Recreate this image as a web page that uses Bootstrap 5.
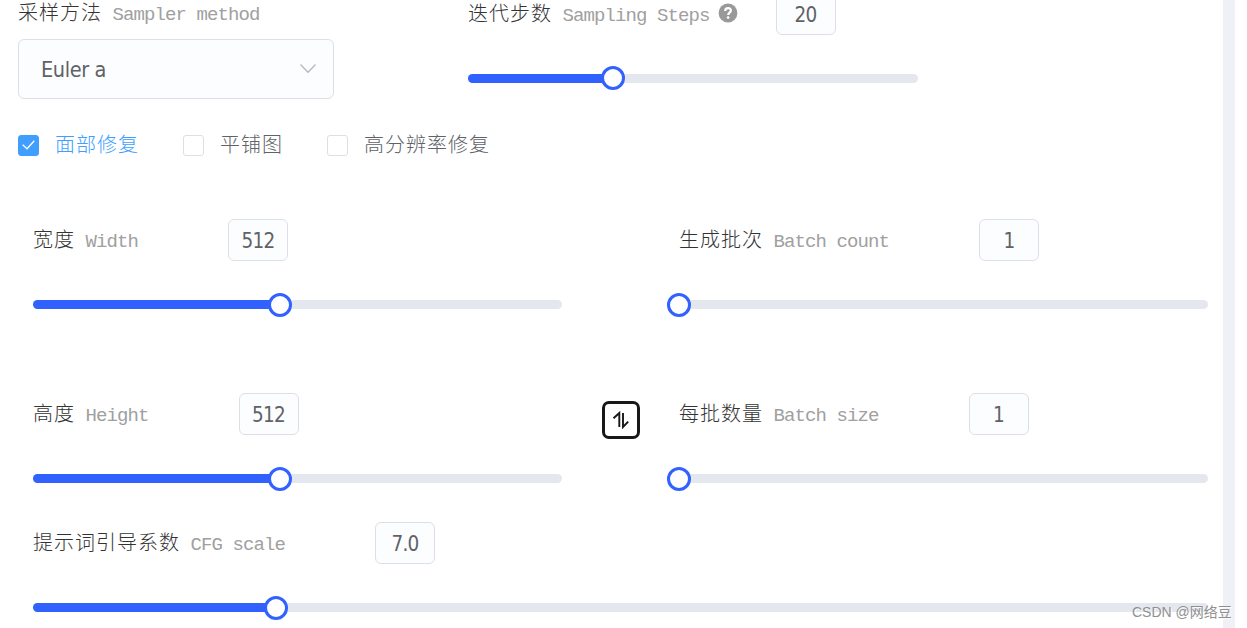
<!DOCTYPE html>
<html lang="zh-CN">
<head>
  <meta charset="UTF-8" />
  <meta name="viewport" content="width=device-width, initial-scale=1.0"/>
  <title>采样设置</title>
  <!-- Bootstrap CDN -->
  <link href="https://cdn.jsdelivr.net/npm/bootstrap@5.3.0/dist/css/bootstrap.min.css" rel="stylesheet">
  <style>
    body {
      height: 628px;
      overflow: hidden;
      background: #fff;
      color: #333;
      font-family: "Liberation Mono", "Noto Sans CJK SC Light", "Noto Sans CJK SC", monospace;
      font-size: 20px;
      font-weight: 300;
      letter-spacing: 1px;
      line-height: 30px;
    }
    .panel {
      width: 1235px;
      height: 628px;
      border-right: 12px solid #f0f1f6;
      overflow: hidden;
    }

    /* labels */
    .en { color: #a0a0a0; font-size: 19px; letter-spacing: -.9px; white-space: pre; }
    .label-text { padding-top: 4px; white-space: nowrap; }
    .param-head { height: 42px; }
    .param-head .num-box { margin-left: 90px; }

    /* inputs */
    .num-box, .sampler-select {
      border: 1px solid #dcdfe6;
      border-radius: 6px;
      background: #fcfdff;
      color: #606266;
      font-family: "DejaVu Sans Condensed", "Noto Sans", sans-serif;
      font-size: 20.5px;
      font-weight: 400;
      letter-spacing: -.7px;
    }
    .num-box { width: 60px; height: 42px; padding-top: 2px; flex: none; }
    .sampler-select { width: 316px; height: 60px; padding: 2px 16px 0 22px; font-size: 21.5px; letter-spacing: -.4px; }
    .sampler-select svg { margin-top: -2px; }

    /* sliders */
    .track { height: 9px; border-radius: 5px; background: #e4e7ed; }
    .track-fill { height: 9px; border-radius: 5px; background: #3162ff; }
    .thumb {
      position: absolute;
      top: -7px;
      width: 24px;
      height: 24px;
      border: 3px solid #3162ff;
      border-radius: 50%;
      background: #fff;
      transform: translateX(-50%);
    }
    .param-head + .track { margin-top: 39px; }

    .top-row { height: 99px; padding-left: 18px; }
    .sampler-col { width: 450px; margin-top: -4px; }
    .sampler-select { margin-top: 9px; }
    .steps-col { width: 450px; margin-top: -7px; }
    .steps-col .thumb { top: -8px; }
    .help-icon { margin: -2px 0 0 8px; }
    .steps-col .param-head .num-box { margin-left: 38px; }

    .check-row { padding: 31px 0 0 18px; gap: 44px; color: #606266; }
    .check-item { height: 30px; gap: 16px; }
    .check-item .check-text { padding-top: 3px; }
    .check-box {
      width: 21px;
      height: 21px;
      border: 1px solid #dcdfe6;
      border-radius: 3px;
      background: #fff;
    }
    .check-item.checked { color: #409eff; }
    .check-item.checked .check-box { border-color: #409eff; background: #409eff; }

    .param-row { padding-left: 33px; }
    .param { width: 529px; }
    .param.wide { width: 1175px; }
    .swap-col { width: 117px; padding: 8px 0 0 40px; }
    .swap-btn {
      width: 38px;
      height: 38px;
      border: 3px solid #18181a;
      border-radius: 7px;
      background: #fff;
    }
    .row-size { padding-top: 59px; }
    .row-height { padding-top: 84px; }
    .row-cfg { padding-top: 39px; }

    .watermark {
      position: absolute;
      left: 1132px;
      top: 601px;
      color: #909090;
      font: 400 14px/22px "Liberation Sans", "Noto Sans CJK SC", sans-serif;
      letter-spacing: 0;
      text-shadow: 1px 1px 0 rgba(255, 255, 255, .8);
      white-space: nowrap;
    }
  </style>
</head>
<body>

  <main class="panel">

    <!-- Sampler and steps -->
    <section class="top-row d-flex align-items-start">
      <div class="sampler-col">
        <div class="label-text">采样方法<span class="en"> Sampler method</span></div>
        <div class="sampler-select d-flex align-items-center justify-content-between">
          <span>Euler a</span>
          <svg width="18" height="12" viewBox="0 0 18 12" fill="none" stroke="#b4b8c0" stroke-width="1.3"><path d="M1.5 1.5 9 9.3l7.500-7.800"/></svg>
        </div>
      </div>
      <div class="steps-col">
        <div class="param-head d-flex align-items-center">
          <span class="label-text">迭代步数<span class="en"> Sampling Steps</span></span>
          <svg class="help-icon" width="20" height="20" viewBox="0 0 20 20">
            <circle cx="10" cy="10" r="9.400" fill="#999"/>
            <path d="M7.200 7.900c0-3.700 5.700-3.700 5.700-.3 0 2-2.700 2.100-2.700 4.300" fill="none" stroke="#fff" stroke-width="2.200"/>
            <circle cx="10.100" cy="14.500" r="1.350" fill="#fff"/>
          </svg>
          <div class="num-box d-flex align-items-center justify-content-center">20</div>
        </div>
        <div class="track position-relative">
          <div class="track-fill" style="width: 32.2%"></div>
          <div class="thumb" style="left: 32.2%"></div>
        </div>
      </div>
    </section>

    <!-- Options -->
    <section class="check-row d-flex">
      <div class="check-item checked d-flex align-items-center">
        <span class="check-box d-flex align-items-center justify-content-center">
          <svg width="15" height="13" viewBox="0 0 15 13" fill="none" stroke="#fff" stroke-width="1.300"><path d="M1.700 5.700 6 9.800l7.300-8"/></svg>
        </span>
        <span class="check-text">面部修复</span>
      </div>
      <div class="check-item d-flex align-items-center">
        <span class="check-box"></span>
        <span class="check-text">平铺图</span>
      </div>
      <div class="check-item d-flex align-items-center">
        <span class="check-box"></span>
        <span class="check-text">高分辨率修复</span>
      </div>
    </section>

    <!-- Width / batch count -->
    <section class="param-row row-size d-flex">
      <div class="param">
        <div class="param-head d-flex align-items-center">
          <span class="label-text">宽度<span class="en"> Width</span></span>
          <div class="num-box d-flex align-items-center justify-content-center">512</div>
        </div>
        <div class="track position-relative">
          <div class="track-fill" style="width: 46.7%"></div>
          <div class="thumb" style="left: 46.7%"></div>
        </div>
      </div>
      <div class="swap-col"></div>
      <div class="param">
        <div class="param-head d-flex align-items-center">
          <span class="label-text">生成批次<span class="en"> Batch count</span></span>
          <div class="num-box d-flex align-items-center justify-content-center">1</div>
        </div>
        <div class="track position-relative">
          <div class="thumb" style="left: 0%"></div>
        </div>
      </div>
    </section>

    <!-- Height / batch size -->
    <section class="param-row row-height d-flex">
      <div class="param">
        <div class="param-head d-flex align-items-center">
          <span class="label-text">高度<span class="en"> Height</span></span>
          <div class="num-box d-flex align-items-center justify-content-center">512</div>
        </div>
        <div class="track position-relative">
          <div class="track-fill" style="width: 46.7%"></div>
          <div class="thumb" style="left: 46.7%"></div>
        </div>
      </div>
      <div class="swap-col">
        <div class="swap-btn d-flex align-items-center justify-content-center">
          <svg width="18" height="18" viewBox="0 0 18 18" fill="none" stroke="#18181a" stroke-width="1.900"><path d="M1.500 7.300 7.300 2v14M11 2v14l5.200-5.400"/></svg>
        </div>
      </div>
      <div class="param">
        <div class="param-head d-flex align-items-center">
          <span class="label-text">每批数量<span class="en"> Batch size</span></span>
          <div class="num-box d-flex align-items-center justify-content-center">1</div>
        </div>
        <div class="track position-relative">
          <div class="thumb" style="left: 0%"></div>
        </div>
      </div>
    </section>

    <!-- CFG scale -->
    <section class="param-row row-cfg d-flex">
      <div class="param wide">
        <div class="param-head d-flex align-items-center">
          <span class="label-text">提示词引导系数<span class="en"> CFG scale</span></span>
          <div class="num-box d-flex align-items-center justify-content-center">7.0</div>
        </div>
        <div class="track position-relative">
          <div class="track-fill" style="width: 20.7%"></div>
          <div class="thumb" style="left: 20.7%"></div>
        </div>
      </div>
    </section>
  </main>

  <div class="watermark">CSDN @网络豆</div>

  <script src="https://cdn.jsdelivr.net/npm/bootstrap@5.3.0/dist/js/bootstrap.bundle.min.js"></script>
</body>
</html>
